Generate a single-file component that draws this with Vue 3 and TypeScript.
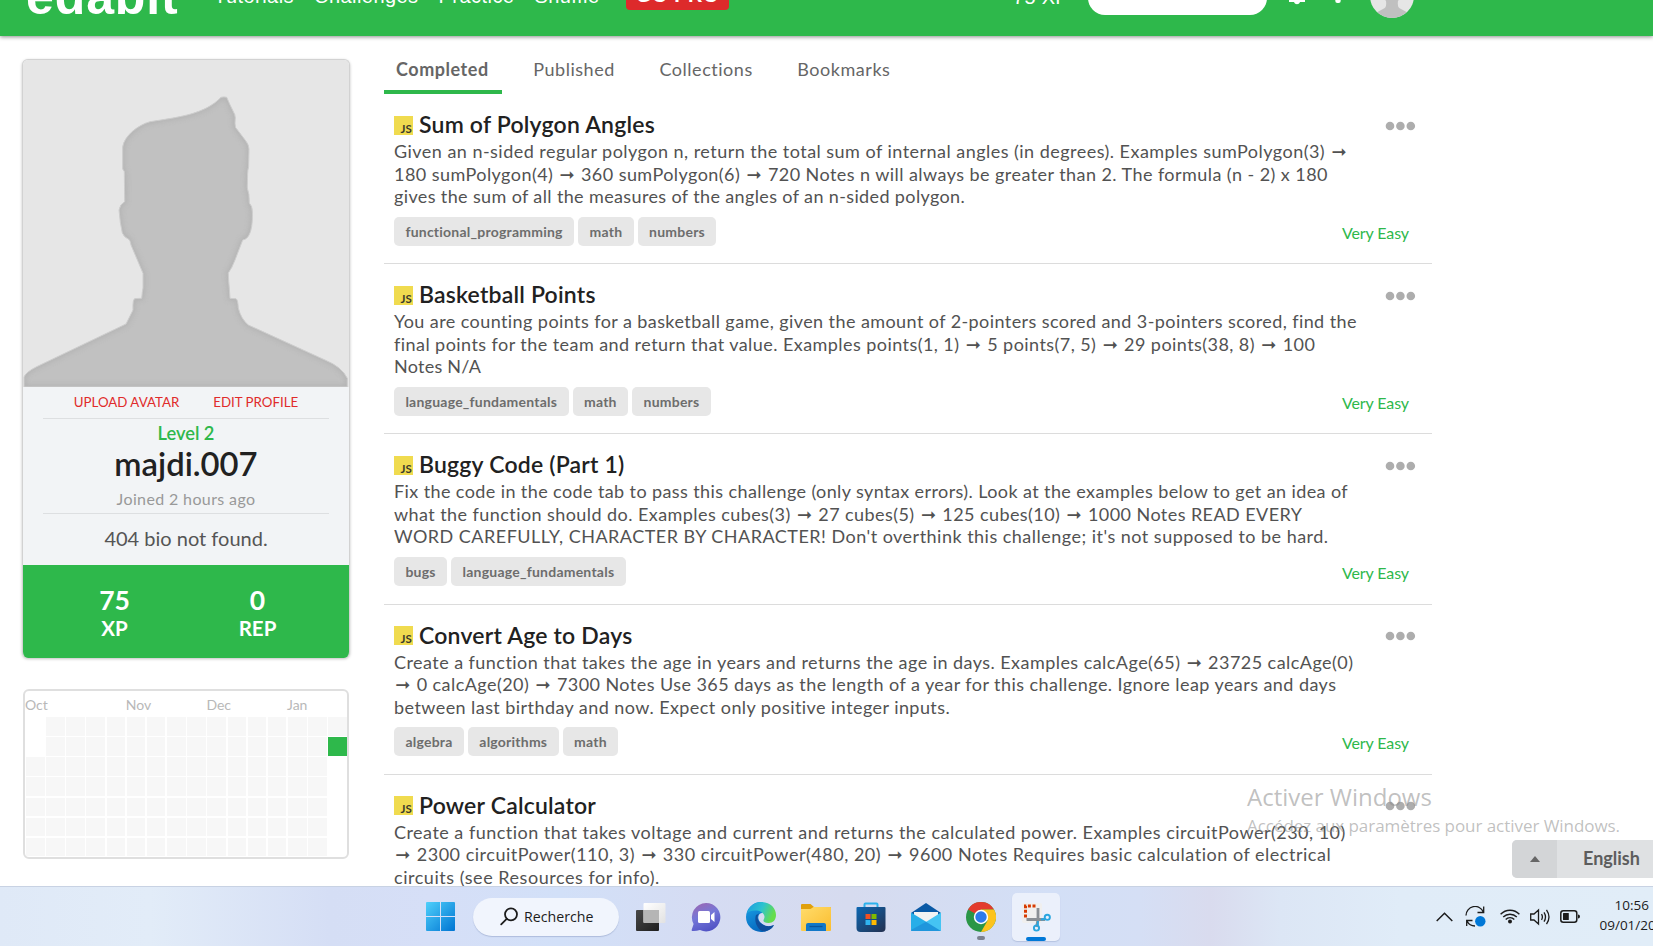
<script setup lang="ts">
interface Line {
  text: string
  tracking: number
}
interface Challenge {
  title: string
  lines: Line[]
  tags: string[]
}

const navLinks = ['Tutorials', 'Challenges', 'Practice', 'Shuffle']
const tabs = ['Completed', 'Published', 'Collections', 'Bookmarks']

const challenges: Challenge[] = [
  {
    title: 'Sum of Polygon Angles',
    lines: [
      { text: 'Given an n-sided regular polygon n, return the total sum of internal angles (in degrees). Examples sumPolygon(3) ➞', tracking: 0.47 },
      { text: '180 sumPolygon(4) ➞ 360 sumPolygon(6) ➞ 720 Notes n will always be greater than 2. The formula (n - 2) x 180', tracking: 0.44 },
      { text: 'gives the sum of all the measures of the angles of an n-sided polygon.', tracking: 0.37 },
    ],
    tags: ['functional_programming', 'math', 'numbers'],
  },
  {
    title: 'Basketball Points',
    lines: [
      { text: 'You are counting points for a basketball game, given the amount of 2-pointers scored and 3-pointers scored, find the', tracking: 0.42 },
      { text: 'final points for the team and return that value. Examples points(1, 1) ➞ 5 points(7, 5) ➞ 29 points(38, 8) ➞ 100', tracking: 0.44 },
      { text: 'Notes N/A', tracking: 0.25 },
    ],
    tags: ['language_fundamentals', 'math', 'numbers'],
  },
  {
    title: 'Buggy Code (Part 1)',
    lines: [
      { text: 'Fix the code in the code tab to pass this challenge (only syntax errors). Look at the examples below to get an idea of', tracking: 0.4 },
      { text: 'what the function should do. Examples cubes(3) ➞ 27 cubes(5) ➞ 125 cubes(10) ➞ 1000 Notes READ EVERY', tracking: 0.43 },
      { text: "WORD CAREFULLY, CHARACTER BY CHARACTER! Don't overthink this challenge; it's not supposed to be hard.", tracking: 0.48 },
    ],
    tags: ['bugs', 'language_fundamentals'],
  },
  {
    title: 'Convert Age to Days',
    lines: [
      { text: 'Create a function that takes the age in years and returns the age in days. Examples calcAge(65) ➞ 23725 calcAge(0)', tracking: 0.45 },
      { text: '➞ 0 calcAge(20) ➞ 7300 Notes Use 365 days as the length of a year for this challenge. Ignore leap years and days', tracking: 0.44 },
      { text: 'between last birthday and now. Expect only positive integer inputs.', tracking: 0.43 },
    ],
    tags: ['algebra', 'algorithms', 'math'],
  },
  {
    title: 'Power Calculator',
    lines: [
      { text: 'Create a function that takes voltage and current and returns the calculated power. Examples circuitPower(230, 10)', tracking: 0.48 },
      { text: '➞ 2300 circuitPower(110, 3) ➞ 330 circuitPower(480, 20) ➞ 9600 Notes Requires basic calculation of electrical', tracking: 0.515 },
      { text: 'circuits (see Resources for info).', tracking: 0.54 },
    ],
    tags: [],
  },
]

// Splits a line so that arrows can carry their own font and width.
const pieces = (line: string): string[] => line.split(/(➞)/).filter((p) => p !== '')

const months = [
  { name: 'Oct', col: 1 },
  { name: 'Nov', col: 6 },
  { name: 'Dec', col: 10 },
  { name: 'Jan', col: 14 },
]

const days: string[] = []
for (let row = 0; row < 7; row++) {
  for (let col = 0; col < 16; col++) {
    if (col === 0 && row < 2) days.push('none')
    else if (col === 15) days.push(row === 0 ? '' : row === 1 ? 'active' : 'none')
    else days.push('')
  }
}
</script>

<template>
  <div class="screen">
    <div class="page">
      <header class="topbar">
        <div class="topbar-inner">
          <div class="logo">edabit</div>
          <nav class="nav">
            <span v-for="l in navLinks" :key="l">{{ l }}</span>
          </nav>
          <div class="pro"><span>GO PRO</span></div>
          <div class="xp">75 XP</div>
          <div class="search-box"></div>
          <svg class="bell" width="18" height="24" viewBox="0 0 18 24"><path d="M9 1 C4 1 3 5 3 9 C3 14 1 16 1 18 H17 C17 16 15 14 15 9 C15 5 14 1 9 1Z" fill="#fff" /><path d="M1 17h16v2h-5c-1 3-5 3-6 0h-5z" fill="#fff" /></svg>
          <svg class="dots-v" width="6" height="24" viewBox="0 0 6 24"><rect x="0.3" y="15" width="5.4" height="6" rx="2" fill="#fff" /></svg>
          <svg class="mini-avatar" width="44" height="44" viewBox="0 0 44 44">
            <clipPath id="round"><circle cx="22" cy="22" r="22" /></clipPath>
            <g clip-path="url(#round)">
              <rect width="44" height="44" fill="#e6e6e6" />
              <path d="M12 5 H32 V20 Q31 23 28 27 Q27 34 31 35 L44 42 V44 H0 V42 L13 35 Q17 34 16 27 Q13 23 12 20Z" fill="#c0c0c0" />
            </g>
          </svg>
        </div>
      </header>

      <div class="columns">
        <aside class="sidebar">
          <section class="card">
            <svg class="avatar" viewBox="23 60 326 327" preserveAspectRatio="none">
              <defs>
                <filter id="inner" x="-5%" y="-5%" width="110%" height="110%">
                  <feGaussianBlur stdDeviation="2.5" />
                </filter>
                <path id="person" d="M221 97.3 Q224 96.5 226.7 97.3 Q229 103 233 111 Q235.5 115 235.3 118 Q234.6 124 235.6 127.5 L245.5 140.5 Q249 145 249 149 L248.6 167 Q247.6 170 247.6 174 L247.3 188 Q249.6 194 249.3 203 Q252.3 206 252.3 211 C253 226 250.5 239 242.7 240 L235 260 Q232 268 228.3 273 Q228.5 281 229.3 288 L230 298.4 L236 298.7 Q238 300 238.3 308 Q241 319 248.3 325 L325 360 Q342 367 347.3 378.3 V387 H24 V377 Q26 372 36.7 366.7 L126 324 L133 310 Q132.5 299 135 298.6 L141.7 298.3 Q142.2 292 143 288 V273.3 L131 245 Q130 240 129 239.5 Q124 237 122.3 233 Q120 223 119 210 Q120 204 124.7 201.7 L124.3 171.5 L122.7 169 V147 C124 136 138 125 150 121.7 C180 117 205 114 221 97.3Z" />
                <clipPath id="person-clip"><use href="#person" /></clipPath>
              </defs>
              <rect x="23" y="60" width="326" height="327" fill="#e6e6e6" />
              <use href="#person" fill="#c1c1c1" />
              <g clip-path="url(#person-clip)">
                <use href="#person" fill="none" stroke="#a8a8a8" stroke-width="4" filter="url(#inner)" opacity="0.6" />
              </g>
              <use href="#person" fill="none" stroke="#cecece" stroke-width="1" />
            </svg>
            <div class="actions"><span>UPLOAD AVATAR</span><span>EDIT PROFILE</span></div>
            <div class="who">
              <div class="level">Level 2</div>
              <div class="name">majdi.007</div>
              <div class="joined">Joined 2 hours ago</div>
            </div>
            <div class="bio">404 bio not found.</div>
            <div class="stats">
              <div><div class="num">75</div><div class="lab">XP</div></div>
              <div><div class="num">0</div><div class="lab">REP</div></div>
            </div>
          </section>

          <section class="calendar">
            <div class="months">
              <span v-for="m in months" :key="m.name" :style="{ gridColumnStart: m.col }">{{ m.name }}</span>
            </div>
            <div class="days">
              <i v-for="(d, i) in days" :key="i" :class="d"></i>
            </div>
          </section>
        </aside>

        <main class="main">
          <div class="tabs">
            <div v-for="(t, i) in tabs" :key="t" class="tab" :class="{ on: i === 0 }">{{ t }}</div>
          </div>
          <article v-for="c in challenges" :key="c.title" class="item">
            <div class="head">
              <svg class="js" width="19" height="19" viewBox="0 0 19 19"><rect width="19" height="19" fill="#f0db4f" /><text x="17.800" y="17" text-anchor="end" font-family="Lato, sans-serif" font-weight="700" font-size="11.500" fill="#3b3a2c">JS</text></svg>
              <h3>{{ c.title }}</h3>
              <svg class="more" width="32" height="10" viewBox="0 0 32 10"><g fill="#adadad"><circle cx="5" cy="5" r="4.3" /><circle cx="15.4" cy="5" r="4.3" /><circle cx="25.8" cy="5" r="4.3" /></g></svg>
            </div>
            <div class="desc">
              <div v-for="(l, i) in c.lines" :key="i" :style="{ letterSpacing: l.tracking + 'px' }"><template v-for="(p, k) in pieces(l.text)" :key="k"><span v-if="p === '➞'" class="arrow">➞</span><template v-else>{{ p }}</template></template></div>
            </div>
            <div class="foot">
              <span v-for="t in c.tags" :key="t" class="tag">{{ t }}</span>
              <span class="diff">Very Easy</span>
            </div>
          </article>
        </main>
      </div>

      <div class="watermark">
        <div class="wm-title">Activer Windows</div>
        <div class="wm-sub">Accédez aux paramètres pour activer Windows.</div>
      </div>
      <div class="lang">
        <div class="lang-toggle"><i></i></div>
        <div class="lang-name">English</div>
      </div>
    </div>

    <footer class="taskbar">
      <svg class="start" width="29" height="29" viewBox="0 0 29 29">
        <defs><linearGradient id="win" x1="0" y1="0" x2="1" y2="1"><stop offset="0" stop-color="#4fd0fb" /><stop offset="1" stop-color="#0074d2" /></linearGradient></defs>
        <path d="M1 0H14V14H0V1Q0 0 1 0ZM15 0H28Q29 0 29 1V14H15ZM0 15H14V29H1Q0 29 0 28ZM15 15H29V28Q29 29 28 29H15Z" fill="url(#win)" />
      </svg>
      <div class="search">
        <svg width="19" height="19" viewBox="0 0 19 19" fill="none" stroke="#1c1c1c" stroke-width="1.8"><circle cx="11" cy="7.3" r="6" /><path d="M6.7 11.8L1.2 17.3" stroke-linecap="round" /></svg>
        <span>Recherche</span>
      </div>
      <div class="slot">
        <svg width="30" height="30" viewBox="0 0 30 30">
          <defs>
            <linearGradient id="tv1" x1="0" y1="0" x2="1" y2="1"><stop offset="0" stop-color="#484848" /><stop offset="1" stop-color="#1e1e1e" /></linearGradient>
            <linearGradient id="tv2" x1="0" y1="0" x2="1" y2="1"><stop offset="0" stop-color="#ffffff" /><stop offset="1" stop-color="#e2e2e2" /></linearGradient>
          </defs>
          <rect x="0" y="8" width="23" height="21" rx="1" fill="url(#tv1)" />
          <rect x="7.5" y="1" width="22" height="20" rx="1" fill="url(#tv2)" />
          <path d="M7.5 8H23V21H8.5Q7.5 21 7.5 20Z" fill="#b5b5b5" />
        </svg>
      </div>
      <div class="slot">
        <svg width="30" height="30" viewBox="0 0 30 30">
          <defs><linearGradient id="chat" x1="0.2" y1="0" x2="0.6" y2="1"><stop offset="0" stop-color="#9a68b4" /><stop offset="0.45" stop-color="#7578d8" /><stop offset="1" stop-color="#5052c4" /></linearGradient></defs>
          <path d="M15 1A14.2 14.2 0 1 1 9 28Q5 29.3 1.3 29Q0.3 28.7 0.8 27.5L2.6 22A14.2 14.2 0 0 1 15 1Z" fill="url(#chat)" />
          <rect x="7" y="9" width="12" height="12" rx="1.5" fill="#fff" />
          <path d="M20 13L23.5 10V20L20 17Z" fill="#fff" />
        </svg>
      </div>
      <div class="slot">
        <svg width="30" height="30" viewBox="0 0 30 30">
          <defs>
            <linearGradient id="e1" x1="0" y1="0" x2="1" y2="0.35"><stop offset="0" stop-color="#1a9be0" /><stop offset="0.55" stop-color="#2dc3cf" /><stop offset="1" stop-color="#66dd4c" /></linearGradient>
            <linearGradient id="e2" x1="0" y1="0" x2="0.5" y2="1"><stop offset="0" stop-color="#1ca4e8" /><stop offset="1" stop-color="#0566bd" /></linearGradient>
          </defs>
          <path d="M15 0A15 15 0 0 0 15 30C21 30 26 27 28 23C22 26 18 24 14 20C10 14 14 11 16 11L20 6Z" fill="url(#e2)" />
          <path d="M1 11C3 4 9 0 15 0C24 0 30 6 30 13C30 18 27 21 22.5 21C18 21 16.5 19 18 17C20 13 16 9 11 8.5C6.5 8 2.5 9.5 1 11Z" fill="url(#e1)" />
          <path d="M10 13C7.5 20 12 29 19 29.5C24 28 27 25.500 28 23C22 26 13 23 11.5 16C11.5 13.5 12.5 12 14 11Z" fill="#104f9c" />
        </svg>
      </div>
      <div class="slot">
        <svg width="30" height="30" viewBox="0 0 30 30">
          <defs><linearGradient id="fold" x1="0" y1="0" x2="1" y2="1"><stop offset="0" stop-color="#ffdc6b" /><stop offset="1" stop-color="#fbbd2f" /></linearGradient></defs>
          <path d="M0 3Q0 2 1 2H9.5L13 5H29Q30 5 30 6V12H0Z" fill="#e0a00c" />
          <path d="M0 7H9.5L12.5 5H29Q30 5 30 6V28Q30 29 29 29H1Q0 29 0 28Z" fill="url(#fold)" />
          <path d="M5 29V23Q5 21 7 21H23Q25 21 25 23V29Z" fill="#1278c8" />
          <path d="M8.5 24.5H21.5" stroke="#0b559b" stroke-width="1.3" />
        </svg>
      </div>
      <div class="slot">
        <svg width="30" height="30" viewBox="0 0 30 30">
          <defs><linearGradient id="store" x1="0" y1="0" x2="1" y2="1"><stop offset="0" stop-color="#0c67b2" /><stop offset="1" stop-color="#24304f" /></linearGradient></defs>
          <path d="M8.500 6V2.500Q8.500 1.500 9.500 1.500H20.500Q21.500 1.500 21.500 2.500V6" fill="none" stroke="#2cb2ec" stroke-width="2" />
          <path d="M0.500 6Q0.500 5 1.500 5H28.500Q29.500 5 29.500 6V26Q29.500 30 25.500 30H4.500Q0.500 30 0.500 26Z" fill="url(#store)" />
          <rect x="9.500" y="12" width="5" height="5" fill="#f25022" /><rect x="15.500" y="12" width="5" height="5" fill="#7fba00" />
          <rect x="9.500" y="18" width="5" height="5" fill="#30b4f0" /><rect x="15.500" y="18" width="5" height="5" fill="#ffb900" />
        </svg>
      </div>
      <div class="slot">
        <svg width="30" height="30" viewBox="0 0 30 30">
          <path d="M0 11L15 1L30 11V15H0Z" fill="#0a59a5" />
          <path d="M3 10H27V18L15 24L3 18Z" fill="#f3f3f3" />
          <path d="M0 10.500L18 21.500L30 29Q30 29 29 29H1Q0 29 0 28Z" fill="#27aee8" />
          <path d="M30 10.500L3 27.500Q1 29 0.500 29H29Q30 29 30 28Z" fill="#45c4f3" />
          <path d="M15 19.800L30 29H29H1Q0 29 0 28L15 19.800Z" fill="#1f96dc" />
        </svg>
      </div>
      <div class="slot has-dot">
        <svg width="30" height="30" viewBox="0 0 30 30">
          <circle cx="15" cy="15" r="15" fill="#2a9647" />
          <path d="M15 15L2 7.500A15 15 0 0 1 28 7.500H15Z" fill="#e33b2e" />
          <path d="M28 7.500A15 15 0 0 1 15 30L21.500 18.700L15 7.500Z" fill="#fcc31e" />
          <circle cx="15" cy="15" r="7.200" fill="#fff" />
          <circle cx="15" cy="15" r="5.700" fill="#2f7bea" />
        </svg>
      </div>
      <div class="slot">
        <div class="tile">
          <svg width="30" height="30" viewBox="0 0 30 30">
            <rect x="1" y="1" width="20" height="20" rx="2" fill="#f0efee" />
            <path d="M14.500 4H4.500V16" fill="none" stroke="#d83b01" stroke-width="3" stroke-dasharray="3 1.600" />
            <path d="M17 6V18L15.500 25M5.500 17.500H24" fill="none" stroke="#8b8f94" stroke-width="2.800" />
            <circle cx="15.500" cy="26" r="2.600" fill="none" stroke="#2aa6e0" stroke-width="1.900" />
            <circle cx="26.300" cy="15.300" r="2.600" fill="none" stroke="#2aa6e0" stroke-width="1.900" />
            <path d="M16.800 19V23.500M20 17.500L24 17" stroke="#2aa6e0" stroke-width="2" />
          </svg>
        </div>
      </div>
      <div class="tray">
        <svg width="17" height="10" viewBox="0 0 17 10" fill="none" stroke="#1c1c1c" stroke-width="1.500"><path d="M0.700 9L8.500 1.300L16.300 9" /></svg>
        <svg class="sync" width="21" height="21" viewBox="0 0 21 21" fill="none" stroke="#1c1c1c" stroke-width="1.300"><path d="M1 9.500A9 9 0 0 1 18.300 6M18.700 0.500V6.500H12.500M1.700 20V14.500H7.500M2 15A9 9 0 0 0 10 20" /><circle cx="15.300" cy="15.300" r="5.200" fill="#0078d7" stroke="none" /></svg>
        <svg class="wifi" width="20" height="15" viewBox="0 0 20 15" fill="none" stroke="#1c1c1c" stroke-width="1.400"><path d="M0.600 5.300A13 13 0 0 1 19.400 5.300M3.200 8A9.600 9.600 0 0 1 16.800 8M5.700 10.400A6 6 0 0 1 14.300 10.400" /><circle cx="10" cy="12.500" r="2" fill="#1c1c1c" stroke="none" /></svg>
        <svg class="vol" width="21" height="18" viewBox="0 0 21 18" fill="none" stroke="#1c1c1c" stroke-width="1.300"><path d="M0.700 6H4L8.500 2V16L4 12H0.700Z M11.500 6.200Q13.300 9 11.500 11.800M14 4.300Q17 9 14 13.700M16.500 1.800Q21.500 9 16.500 16.200" /></svg>
        <svg class="bat" width="20" height="13" viewBox="0 0 20 13"><rect x="0.800" y="0.800" width="16" height="11.400" rx="2.500" fill="none" stroke="#1c1c1c" stroke-width="1.500" /><rect x="3" y="3" width="5.800" height="7" rx="0.500" fill="#1c1c1c" /><path d="M18 4.500Q20 4.500 20 6.500Q20 8.500 18 8.500Z" fill="#1c1c1c" /></svg>
        <div class="clock"><span>10:56</span><span>09/01/2023</span></div>
      </div>
    </footer>
  </div>
</template>

<style>
body { margin: 0; overflow: hidden; }
</style>

<style scoped>
.screen { width: 100vw; height: 946px; display: flex; flex-direction: column; overflow: hidden; background: #fff; font-family: Lato, "Liberation Sans", sans-serif; color: #4a4a4a; }
.page { height: 886px; flex: none; overflow: hidden; position: relative; display: flex; flex-direction: column; }

.topbar { height: 36px; flex: none; display: flex; background: #2eb84b; box-shadow: 0 1px 4px rgba(0, 0, 0, 0.45); }
.topbar-inner { height: 74px; margin-top: -38px; padding-left: 26px; display: flex; align-items: center; color: #fff; font-family: "Liberation Sans", sans-serif; }
.logo { width: 188px; font-size: 50px; font-weight: 700; line-height: 60px; letter-spacing: 0.9px; margin-top: -4px; }
.nav { display: flex; gap: 20px; font-size: 20px; letter-spacing: 0.45px; width: 412px; line-height: 24px; margin-top: -6px; }
.pro { width: 103px; height: 22px; border-radius: 4px; background: #dd2a2b; text-align: center; font-weight: 700; font-size: 20px; letter-spacing: 0.5px; }
.pro span { display: block; line-height: 22px; margin-top: -4px; }
.xp { margin-left: 284px; width: 75px; font-size: 20px; line-height: 24px; margin-top: -4px; letter-spacing: 0.3px; white-space: nowrap; }
.search-box { width: 179px; height: 34px; border-radius: 17px; background: #fff; margin-top: -2px; }
.bell { margin-left: 21px; margin-top: -8px; }
.dots-v { margin-left: 29px; margin-top: -10px; }
.mini-avatar { margin-left: 29px; margin-top: -6px; }

.columns { display: flex; align-items: flex-start; }
.sidebar { width: 328px; margin: 23px 34px 0 22px; }
.card { box-sizing: border-box; width: 328px; height: 599px; border-radius: 6px; border: 1px solid #d2d2d2; border-bottom: 0; background: #f2f4f6; overflow: hidden; box-shadow: 0 1px 3px rgba(0, 0, 0, 0.25); text-align: center; }
.avatar { display: block; width: 326px; height: 327px; }
.actions { height: 30px; padding-bottom: 1px; display: flex; justify-content: center; align-items: center; gap: 34px; color: #e02b2b; font-size: 13.3px; }
.who { margin: 0 20px; border-top: 1px solid #dddfe1; border-bottom: 1px solid #dddfe1; }
.level { font-size: 18.3px; line-height: 28px; font-weight: 600; color: #2eb84b; }
.name { font-size: 32.8px; line-height: 33px; font-weight: 600; color: #212121; }
.joined { padding-top: 4px; font-size: 16px; line-height: 29px; color: #999; letter-spacing: 0.37px; }
.bio { font-size: 20px; line-height: 49px; padding-bottom: 2px; color: #555; }
.stats { height: 73px; padding: 20px 20px 0; background: #2eb84b; color: #fff; display: flex; font-weight: 700; }
.stats > div { flex: 1; }
.num { font-size: 26.5px; line-height: 30px; }
.lab { font-size: 20.5px; line-height: 26px; }

.calendar { box-sizing: border-box; width: 326px; height: 170px; margin: 31px 0 0 1px; border: 2px solid #dfdfdf; border-radius: 6px; padding: 0 0 0 1px; }
.months { display: grid; grid-template-columns: repeat(16, 18.5px); column-gap: 1.66px; height: 26px; font-size: 14px; line-height: 28px; color: #b8b8b8; }
.months span { white-space: nowrap; margin-left: -1px; }
.days { display: grid; grid-template-columns: repeat(16, 18.5px); grid-auto-rows: 18.5px; gap: 1.66px; }
.days i { background: #f7f7f7; }
.days .none { background: none; }
.days .active { background: #2eb84b; }

.main { width: 1048px; }
.tabs { display: flex; gap: 19.5px; height: 58px; }
.tab { box-sizing: border-box; height: 58px; padding: 12px 13px 0 12px; line-height: 42px; font-size: 18px; letter-spacing: 0.54px; color: #666; border-bottom: 4px solid transparent; }
.tab.on { font-weight: 700; border-color: #2eb84b; }
.item { box-sizing: border-box; height: 170.2px; padding: 14px 10px 0; border-bottom: 1px solid #dcdcdc; }
.head { display: flex; align-items: center; height: 32px; }
.js { margin-top: 2px; flex: none; }
h3 { margin: 0 0 0 6px; font-size: 23px; line-height: 32px; font-weight: 600; color: #212121; letter-spacing: 0.2px; }
.more { margin: 3px 5px 0 auto; }
.desc { font-size: 18px; line-height: 22.5px; color: #525252; white-space: nowrap; }
.arrow { display: inline-block; width: 17.6px; line-height: 1; text-align: center; font-family: "DejaVu Sans", sans-serif; letter-spacing: 0; }
.foot { display: flex; margin-top: 9.3px; gap: 4px; height: 29px; }
.tag { padding: 0 11.4px; line-height: 29px; border-radius: 5px; background: #e7e7e7; color: #6d6d6d; font-weight: 700; font-size: 14px; letter-spacing: 0.23px; }
.diff { margin: 0 13px 0 auto; font-size: 16px; line-height: 31px; color: #2eb84b; letter-spacing: -0.1px; }

.watermark { position: absolute; left: 1247px; top: 780px; font-family: "Open Sans", "Noto Sans", sans-serif; color: rgba(140, 140, 140, 0.55); white-space: nowrap; }
.wm-title { font-size: 24px; line-height: 33px; }
.wm-sub { font-size: 17px; line-height: 25px; letter-spacing: -0.05px; }
.lang { position: absolute; left: 1512px; top: 840px; width: 180px; height: 38px; display: flex; border-radius: 5px; overflow: hidden; background: #dfe1e3; }
.lang-toggle { width: 45px; background: #d3d5d7; display: flex; align-items: center; justify-content: center; }
.lang-toggle i { border: 5px solid transparent; border-top: 0; border-bottom: 6px solid #666; }
.lang-name { padding-left: 26px; font-size: 18px; line-height: 36px; font-weight: 700; color: #5d5d5d; }

.taskbar { box-sizing: border-box; height: 60px; flex: none; border-top: 1px solid #c8d2e3; padding-left: 426px; display: flex; align-items: center; font-family: "Open Sans", "Noto Sans", sans-serif; color: #1c1c1c; background: linear-gradient(90deg, #dfe9f7 0, #e2ecf8 150px, #d5def5 330px, #d6dff7 430px, #d2e0f8 560px, #d5dcf3 700px, #d6dbef 850px, #d3dff6 1050px, #d5dff5 1140px, #d9dbee 1210px, #dce6f5 1280px, #e0ecf8 1400px, #e1edf8 1653px); }
.search { box-sizing: border-box; width: 146px; flex: none; height: 38px; margin: 0 4.5px 0 18px; border-radius: 19px; background: #f1f5fd; box-shadow: 0 1px 1px rgba(90, 110, 160, 0.3); display: flex; align-items: center; padding-left: 27px; gap: 5px; font-size: 14.2px; }
.slot { width: 55px; height: 59px; flex: none; display: flex; align-items: center; justify-content: center; position: relative; }
.has-dot::after { content: ""; position: absolute; left: 23.5px; top: 49px; width: 8px; height: 4px; border-radius: 2px; background: #7a8190; }
.tile { width: 48px; height: 48px; border-radius: 5px; background: #ebf0fb; box-shadow: 0 1px 1px rgba(90, 110, 160, 0.25); display: flex; align-items: center; justify-content: center; position: relative; }
.tile::after { content: ""; position: absolute; left: 14px; bottom: 0; width: 20px; height: 4px; border-radius: 2px; background: #0078d7; }
.start, .tray svg { flex: none; }
.tray { display: flex; align-items: center; margin-left: 372px; flex: none; }
.sync { margin-left: 12px; }
.wifi { margin-left: 14px; }
.vol { margin-left: 10px; }
.bat { margin-left: 9px; }
.clock { margin: -3px 0 0 20px; width: 74px; display: flex; flex-direction: column; align-items: flex-start; }
.clock span { font-size: 13.5px; line-height: 20px; display: block; }
.clock span:first-child { padding-left: 15px; }
</style>
